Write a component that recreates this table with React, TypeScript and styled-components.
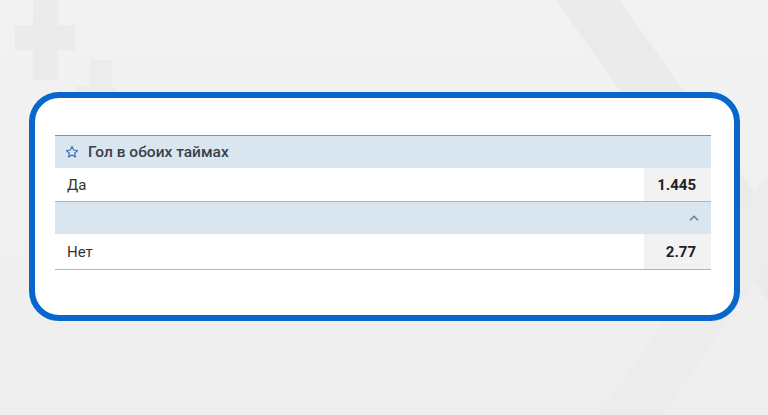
import { createGlobalStyle, styled } from "styled-components";

const GlobalStyle = createGlobalStyle`
  * { box-sizing: border-box; }
  html, body {
    margin: 0;
    padding: 0;
  }
  body {
    font-family: Roboto, "Noto Sans", Arial, sans-serif;
    background-color: #f0f0f0;
    background-image:
      linear-gradient(#ebebeb, #ebebeb),
      linear-gradient(#ebebeb, #ebebeb),
      linear-gradient(#ececec, #ececec),
      linear-gradient(#ececec, #ececec),
      linear-gradient(125deg, transparent 84%, #ececec 84%, #ececec 90%, transparent 90%),
      linear-gradient(55deg, transparent 80%, #ebebeb 80%, #ebebeb 86%, transparent 86%),
      linear-gradient(180deg, #f2f2f2, #eeeeee);
    background-size: 25px 80px, 60px 25px, 22px 30px, 40px 20px, 100% 100%, 100% 100%, 100% 100%;
    background-position: 33px 0, 15px 25px, 90px 60px, 75px 86px, 0 0, 0 0, 0 0;
    background-repeat: no-repeat;
  }
`;

const Page = styled.div`
  width: 768px;
  height: 415px;
  padding: 92px 0 0 29px;
`;

const Card = styled.section`
  width: 711px;
  height: 229px;
  border: 6px solid #0866cc;
  border-radius: 30px;
  background: #ffffff;
  padding: 37px 23px 0 20px;
`;

const Market = styled.div`
  border-top: 1px solid #8f8f8f;
`;

const HeaderRow = styled.div`
  height: 32px;
  display: flex;
  align-items: center;
  justify-content: space-between;
  background: #d9e6ef;
  padding: 0 12px 0 10px;
`;

const Title = styled.div`
  display: flex;
  align-items: center;
  gap: 9px;
  font-size: 15.5px;
  font-weight: 500;
  color: #3a3f4b;
`;

const OutcomeRow = styled.div<{ $tall?: boolean }>`
  height: ${(p) => (p.$tall ? "36px" : "34px")};
  display: flex;
  align-items: stretch;
  border-bottom: 1px solid #b3b3b3;
`;

const Label = styled.div`
  flex: 1;
  display: flex;
  align-items: center;
  padding-left: 12px;
  font-size: 15px;
  color: #333;
`;

const Odd = styled.div`
  width: 67px;
  display: flex;
  align-items: center;
  justify-content: flex-end;
  padding-right: 15px;
  background: #f2f2f2;
  font-size: 15px;
  font-weight: 700;
  color: #222;
`;

function Star() {
  return (
    <svg width="14" height="14" viewBox="0 0 24 24" fill="none" stroke="#2f6db3" strokeWidth="2" strokeLinejoin="round">
      <path d="M12 2.5l2.9 6.1 6.6.8-4.9 4.6 1.3 6.6L12 17.3l-5.9 3.3 1.3-6.6-4.9-4.6 6.6-.8z" />
    </svg>
  );
}

function ChevronUp() {
  return (
    <svg width="10" height="6" viewBox="0 0 10 6" fill="none" stroke="#6c7886" strokeWidth="1.5">
      <path d="M1 5.2L5 1.2l4 4" />
    </svg>
  );
}

export default function App() {
  return (
    <Page>
      <GlobalStyle />
      <Card>
        <Market>
          <HeaderRow>
            <Title>
              <Star />
              Гол в обоих таймах
            </Title>
          </HeaderRow>
          <OutcomeRow>
            <Label>Да</Label>
            <Odd>1.445</Odd>
          </OutcomeRow>
          <HeaderRow>
            <span />
            <ChevronUp />
          </HeaderRow>
          <OutcomeRow $tall>
            <Label>Нет</Label>
            <Odd>2.77</Odd>
          </OutcomeRow>
        </Market>
      </Card>
    </Page>
  );
}
